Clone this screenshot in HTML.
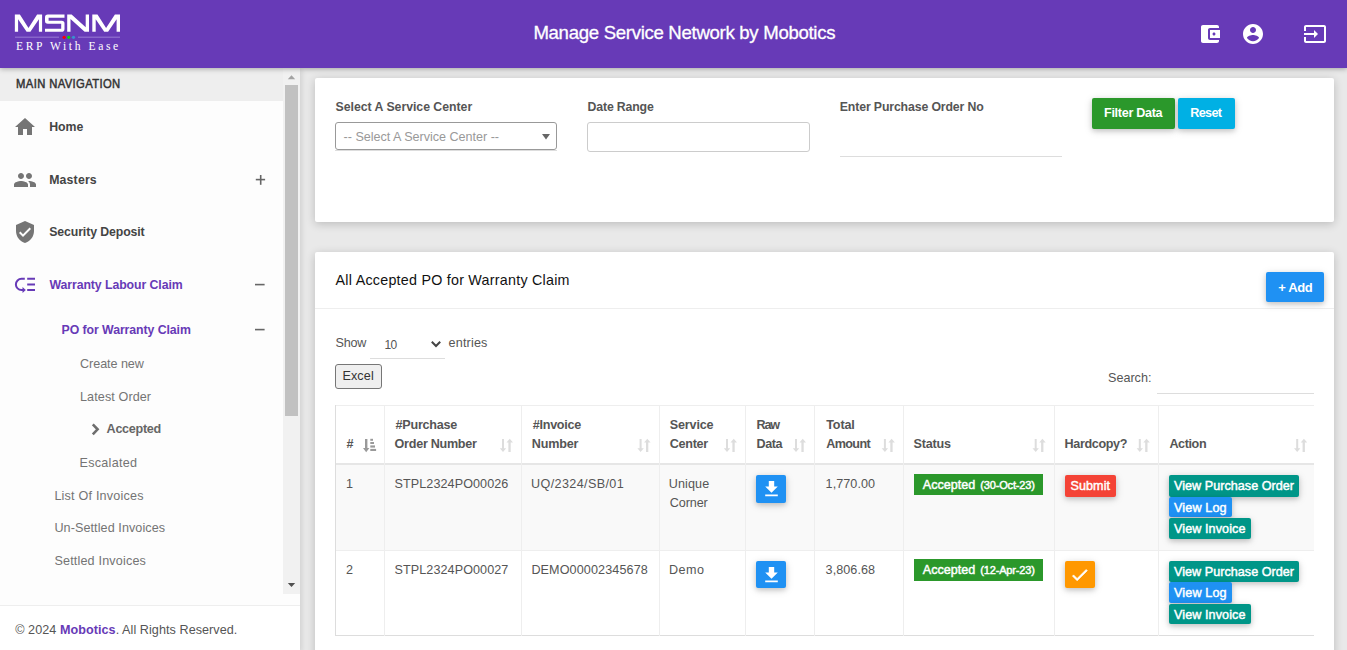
<!DOCTYPE html>
<html><head><meta charset="utf-8">
<style>
*{box-sizing:border-box;margin:0;padding:0}
html,body{width:1347px;height:650px;overflow:hidden;font-family:"Liberation Sans",sans-serif;background:#e9e9e9;color:#555;position:relative}
.a{position:absolute}
.tx{position:absolute;white-space:nowrap;line-height:1;z-index:20}
#hdr{position:absolute;left:0;top:0;width:1347px;height:68px;background:#673ab7;box-shadow:0 1px 5px rgba(0,0,0,.3);z-index:10}
#side{position:absolute;left:0;top:68px;width:300px;height:582px;background:#fdfdfd;box-shadow:2px 2px 5px rgba(0,0,0,.1);z-index:5;overflow:hidden}
.card{position:absolute;background:#fff;border-radius:2px;box-shadow:0 2px 10px rgba(0,0,0,.2)}
.btn{position:absolute;border-radius:2px;box-shadow:0 2px 5px rgba(0,0,0,.16),0 2px 10px rgba(0,0,0,.12)}
.vl{position:absolute;width:1px;background:#eee}
.hl{position:absolute;height:1px;background:#eee}
svg{position:absolute;overflow:visible}

</style></head><body>
<div id="hdr">
  <svg style="left:0;top:0" width="140" height="68" viewBox="0 0 140 68">
    <g fill="#fff">
      <path d="M14.85,31.7 V14.6 H19.9 L28.5,28 L37.1,14.6 H42.1 V31.7 H38.9 V19.3 L30.4,31.7 H26.6 L18.1,19.3 V31.7 Z"/>
      <path d="M64.5,14.6 H47.8 Q45,14.6 45,17.4 V21 Q45,23.8 47.8,23.8 H61.2 V28.7 H45 V31.7 H61.7 Q64.5,31.7 64.5,28.9 V23.6 Q64.5,20.8 61.7,20.8 H48.6 V17.7 H64.5 Z"/>
      <path d="M67.2,31.7 V14.6 H71.6 L85.7,27.2 V14.6 H89 V31.7 H84.6 L70.5,19.1 V31.7 Z"/>
      <path d="M92.3,31.7 V14.6 H97.5 L106.1,28 L114.9,14.6 H120 V31.7 H116.6 V19.3 L108.1,31.7 H104.2 L95.7,19.3 V31.7 Z"/>
    </g>
    <rect x="15" y="36.6" width="44" height="1.2" fill="#9170cf"/>
    <rect x="78" y="36.6" width="42" height="1.2" fill="#9170cf"/>
    <circle cx="64.1" cy="37.3" r="1.6" fill="#ff0000"/>
    <circle cx="68.7" cy="37.3" r="1.6" fill="#00e000"/>
    <circle cx="73.5" cy="37.3" r="1.6" fill="#3a8ed0"/>
    <text x="16" y="49.7" font-family="Liberation Serif" font-size="11.6" fill="#fff" letter-spacing="2.6">ERP With Ease</text>
  </svg>
  <svg style="left:1198px;top:22px" width="24" height="24" viewBox="0 0 24 24"><path fill="#fff" d="M21 18v1c0 1.1-.9 2-2 2H5c-1.11 0-2-.9-2-2V5c0-1.1.89-2 2-2h14c1.1 0 2 .9 2 2v1h-9c-1.11 0-2 .9-2 2v8c0 1.1.89 2 2 2h9zm-9-2h10V8H12v8zm4-2.5c-.83 0-1.5-.67-1.5-1.5s.67-1.5 1.5-1.5 1.5.67 1.5 1.5-.67 1.5-1.5 1.5z"/></svg>
  <svg style="left:1241px;top:22px" width="24" height="24" viewBox="0 0 24 24"><path fill="#fff" d="M12 2C6.48 2 2 6.48 2 12s4.48 10 10 10 10-4.48 10-10S17.52 2 12 2zm0 3c1.66 0 3 1.34 3 3s-1.34 3-3 3-3-1.34-3-3 1.34-3 3-3zm0 14.2c-2.5 0-4.71-1.28-6-3.22.03-1.99 4-3.080 6-3.08 1.99 0 5.97 1.09 6 3.08-1.29 1.94-3.5 3.22-6 3.22z"/></svg>
  <svg style="left:1303px;top:22px" width="24" height="24" viewBox="0 0 24 24"><path fill="#fff" d="M21 3.01H3c-1.1 0-2 .9-2 2V9h2V4.99h18v14.03H3V15H1v4.01c0 1.1.9 1.98 2 1.98h18c1.1 0 2-.88 2-1.98v-14c0-1.11-.9-2-2-2zM11 16l4-4-4-4v3H1v2h10v3z"/></svg>
</div>

<div id="side">
  <div class="a" style="left:0;top:0;width:285px;height:33px;background:#eee"></div>
  <!-- scrollbar -->
  <div class="a" style="left:283px;top:0;width:17px;height:526px;background:#f1f1f1"></div>
  <div class="a" style="left:285px;top:17px;width:13px;height:331px;background:#c1c1c1"></div>
  <svg style="left:283px;top:0" width="17" height="526"><path d="M4.8,11.3 L8.5,7.3 L12.2,11.3 Z" fill="#a3a3a3"/><path d="M4.8,515 L8.5,519 L12.2,515 Z" fill="#505050"/></svg>
  <!-- footer -->
  <div class="a" style="left:0;top:537px;width:300px;height:45px;background:#fff;border-top:1px solid #eee"></div>
  <!-- icons -->
  <svg style="left:12.7px;top:47px" width="24" height="24" viewBox="0 0 24 24"><path fill="#757575" d="M10 20v-6h4v6h5v-8h3L12 3 2 12h3v8z"/></svg>
  <svg style="left:13px;top:100px" width="24" height="24" viewBox="0 0 24 24"><path fill="#757575" d="M16 11c1.66 0 2.99-1.34 2.99-3S17.66 5 16 5c-1.66 0-3 1.34-3 3s1.34 3 3 3zm-8 0c1.66 0 2.99-1.34 2.99-3S9.66 5 8 5C6.34 5 5 6.34 5 8s1.34 3 3 3zm0 2c-2.33 0-7 1.17-7 3.5V19h14v-2.5c0-2.330-4.67-3.5-7-3.5zm8 0c-.29 0-.62.02-.97.05 1.16.84 1.97 1.97 1.97 3.45V19h6v-2.5c0-2.33-4.670-3.5-7-3.5z"/></svg>
  <svg style="left:12.8px;top:152px" width="24" height="24" viewBox="0 0 24 24"><path fill="#757575" d="M12 1L3 5v6c0 5.55 3.84 10.74 9 12 5.16-1.26 9-6.45 9-12V5l-9-4zm-2 16l-4-4 1.41-1.41L10 14.17l6.59-6.59L18 9l-8 8z"/></svg>
  <svg style="left:0;top:0" width="300" height="582">
    <g fill="none" stroke="#673ab7" stroke-width="2">
      <path d="M24.8,210.8 H21.5 A5.5,5.5 0 0 0 21.5,222 H23.5"/>
      <path d="M27.2,210.8 H35 M27.2,216.5 H35 M27.2,222 H35"/>
    </g>
    <path d="M22.5,219 L25.8,222 L22.5,225 Z" fill="#673ab7"/>
    <g fill="#666">
      <rect x="255.8" y="110.8" width="9.3" height="1.6"/>
      <rect x="259.9" y="107" width="1.6" height="9.8"/>
      <rect x="255" y="215.8" width="9.6" height="1.6"/>
      <rect x="255" y="260.8" width="9.6" height="1.6"/>
    </g>
    <path d="M92.8,356.3 L97.6,361.3 L92.8,366.3" fill="none" stroke="#6e6e6e" stroke-width="2.6"/>
  </svg>
</div>

<!-- card 1 -->
<div class="card" style="left:315px;top:78px;width:1019px;height:144px"></div>
<div class="a" style="left:335px;top:122px;width:222px;height:28px;border:1px solid #999;border-radius:3px;background:#fff"></div>
<div class="hl" style="left:335px;top:150px;width:222px;background:#ddd"></div>
<svg style="left:0;top:0" width="1" height="1"><path d="M542,134 L550,134 L546,139.5 Z" fill="#666"/></svg>
<div class="a" style="left:587px;top:122px;width:223px;height:30px;border:1px solid #ccc;border-radius:3px;background:#fff"></div>
<div class="hl" style="left:840px;top:156px;width:222px;background:#ddd"></div>
<div class="btn" style="left:1092px;top:98px;width:83px;height:31px;background:#2b982b"></div>
<div class="btn" style="left:1178px;top:98px;width:57px;height:31px;background:#00b0e4"></div>

<!-- card 2 -->
<div class="card" style="left:315px;top:252px;width:1019px;height:430px"></div>
<div class="hl" style="left:315px;top:308px;width:1019px;background:#eee"></div>
<div class="btn" style="left:1266px;top:272px;width:58px;height:30px;background:#1f91f3"></div>
<div class="hl" style="left:370px;top:358px;width:75px;background:#ddd"></div>
<svg style="left:0;top:0" width="1" height="1"><path d="M431.8,341.8 L436,346 L440.2,341.8" fill="none" stroke="#444" stroke-width="2"/></svg>
<div class="a" style="left:335px;top:364px;width:47px;height:25px;border:1px solid #767676;border-radius:3px;background:#efefef"></div>
<div class="hl" style="left:1157px;top:393px;width:157px;background:#ddd"></div>

<!-- table -->
<div class="a" style="left:335px;top:464px;width:979px;height:86px;background:#f9f9f9"></div>
<div class="hl" style="left:335px;top:405px;width:979px"></div>
<div class="hl" style="left:335px;top:463px;width:979px;height:2px;background:#e6e6e6"></div>
<div class="hl" style="left:335px;top:550px;width:979px"></div>
<div class="hl" style="left:335px;top:635px;width:979px;background:#ddd"></div>
<div class="vl" style="left:335px;top:405px;height:231px;background:#ddd"></div>
<div class="vl" style="left:384px;top:405px;height:231px"></div>
<div class="vl" style="left:521px;top:405px;height:231px"></div>
<div class="vl" style="left:659px;top:405px;height:231px"></div>
<div class="vl" style="left:745px;top:405px;height:231px"></div>
<div class="vl" style="left:814px;top:405px;height:231px"></div>
<div class="vl" style="left:903px;top:405px;height:231px"></div>
<div class="vl" style="left:1054px;top:405px;height:231px"></div>
<div class="vl" style="left:1158px;top:405px;height:231px"></div>

<!-- sort icons -->
<svg style="left:0;top:0" width="1" height="1">
  <g fill="#999">
    <rect x="365" y="439" width="2.4" height="10"/>
    <path d="M363,448 L369.4,448 L366.2,452.2 Z"/>
    <rect x="370.3" y="438.8" width="2.7" height="2"/>
    <rect x="370.3" y="442" width="3.7" height="2"/>
    <rect x="370.3" y="445.4" width="4.7" height="2.2"/>
    <rect x="370.3" y="448.9" width="5.8" height="2.1"/>
  </g>
  <g fill="#ddd">
    <g id="both">
      <rect x="502" y="439" width="2" height="10"/>
      <path d="M499.8,448.2 L506.2,448.2 L503,452 Z"/>
      <rect x="508.4" y="442" width="2.3" height="10"/>
      <path d="M506.5,442.5 L513,442.5 L509.7,438.8 Z"/>
    </g>
    <use href="#both" x="137.6" y="0"/>
    <use href="#both" x="224" y="0"/>
    <use href="#both" x="293" y="0"/>
    <use href="#both" x="381.9" y="0"/>
    <use href="#both" x="532.7" y="0"/>
    <use href="#both" x="636.8" y="0"/>
    <use href="#both" x="794.2" y="0"/>
  </g>
</svg>

<!-- row buttons -->
<div class="btn" style="left:756px;top:475px;width:30px;height:28px;background:#1f91f3"></div>
<div class="btn" style="left:756px;top:561px;width:30px;height:27px;background:#1f91f3"></div>
<svg style="left:0;top:0" width="1" height="1">
  <g fill="#fff">
    <path transform="translate(760.7,478.3) scale(0.9)" d="M19 9h-4V3H9v6H5l7 7 7-7zM5 18v2h14v-2H5z"/>
    <path transform="translate(760.7,564.3) scale(0.9)" d="M19 9h-4V3H9v6H5l7 7 7-7zM5 18v2h14v-2H5z"/>
  </g>
</svg>
<div class="a" style="left:914px;top:474px;width:129px;height:21px;background:#2b982b"></div>
<div class="a" style="left:914px;top:559px;width:129px;height:22px;background:#2b982b"></div>
<div class="btn" style="left:1065px;top:475px;width:51px;height:21.5px;background:#f44336"></div>
<div class="btn" style="left:1065px;top:561px;width:30px;height:26.6px;background:#ff9800"></div>
<svg style="left:0;top:0" width="1" height="1"><path transform="translate(1069.5,564.7) scale(0.85)" fill="#fff" stroke="#fff" stroke-width="0.7" d="M9 16.17L4.830 12l-1.42 1.41L9 19 21 7l-1.41-1.41z"/></svg>
<div class="btn" style="left:1169px;top:475px;width:130px;height:21.5px;background:#009688"></div>
<div class="btn" style="left:1169px;top:497.4px;width:62.6px;height:19.7px;background:#1f91f3"></div>
<div class="btn" style="left:1169px;top:518.1px;width:82px;height:21.2px;background:#009688"></div>
<div class="btn" style="left:1169px;top:561px;width:130px;height:20.5px;background:#009688"></div>
<div class="btn" style="left:1169px;top:582.4px;width:62.6px;height:20.6px;background:#1f91f3"></div>
<div class="btn" style="left:1169px;top:604px;width:82px;height:20.3px;background:#009688"></div>

<div id="title" class="tx" style="left:533.40px;top:23.96px;font-size:18.60px;font-weight:normal;color:#fff;letter-spacing:-0.303px;-webkit-text-stroke:0.3px #fff;">Manage Service Network by Mobotics</div>
<div id="mainnav" class="tx" style="left:16.00px;top:77.76px;font-size:12.80px;font-weight:normal;color:#333;letter-spacing:0.421px;-webkit-text-stroke:0.5px #333;transform:scaleX(0.88);transform-origin:0 0;">MAIN NAVIGATION</div>
<div id="home" class="tx" style="left:49.20px;top:121.19px;font-size:12.30px;font-weight:bold;color:#444;letter-spacing:-0.003px;">Home</div>
<div id="masters" class="tx" style="left:49.20px;top:174.19px;font-size:12.30px;font-weight:bold;color:#444;letter-spacing:0.168px;">Masters</div>
<div id="secdep" class="tx" style="left:49.20px;top:226.29px;font-size:12.30px;font-weight:bold;color:#444;letter-spacing:-0.101px;">Security Deposit</div>
<div id="wlc" class="tx" style="left:49.40px;top:278.89px;font-size:12.30px;font-weight:bold;color:#673ab7;letter-spacing:-0.075px;">Warranty Labour Claim</div>
<div id="pofw" class="tx" style="left:61.60px;top:324.19px;font-size:12.30px;font-weight:bold;color:#673ab7;letter-spacing:-0.075px;">PO for Warranty Claim</div>
<div id="create" class="tx" style="left:80.00px;top:358.33px;font-size:12.60px;font-weight:normal;color:#747474;letter-spacing:-0.054px;">Create new</div>
<div id="latest" class="tx" style="left:80.00px;top:391.23px;font-size:12.60px;font-weight:normal;color:#747474;letter-spacing:0.097px;">Latest Order</div>
<div id="accepted" class="tx" style="left:106.60px;top:423.03px;font-size:12.60px;font-weight:bold;color:#666;letter-spacing:-0.288px;">Accepted</div>
<div id="escal" class="tx" style="left:79.60px;top:456.93px;font-size:12.60px;font-weight:normal;color:#747474;letter-spacing:0.250px;">Escalated</div>
<div id="loi" class="tx" style="left:54.40px;top:489.93px;font-size:12.60px;font-weight:normal;color:#747474;letter-spacing:0.201px;">List Of Invoices</div>
<div id="usi" class="tx" style="left:54.40px;top:522.03px;font-size:12.60px;font-weight:normal;color:#747474;letter-spacing:0.083px;">Un-Settled Invoices</div>
<div id="si" class="tx" style="left:54.40px;top:554.73px;font-size:12.60px;font-weight:normal;color:#747474;letter-spacing:0.171px;">Settled Invoices</div>
<div id="foot" class="tx" style="left:15.20px;top:624.43px;font-size:12.60px;font-weight:normal;color:#555;letter-spacing:0.061px;">&copy; 2024 <b style="color:#673ab7">Mobotics</b>. All Rights Reserved.</div>
<div id="lbl1" class="tx" style="left:335.60px;top:101.09px;font-size:12.30px;font-weight:bold;color:#555;letter-spacing:-0.026px;">Select A Service Center</div>
<div id="lbl2" class="tx" style="left:587.60px;top:101.09px;font-size:12.30px;font-weight:bold;color:#555;letter-spacing:-0.162px;">Date Range</div>
<div id="lbl3" class="tx" style="left:839.80px;top:101.09px;font-size:12.30px;font-weight:bold;color:#555;letter-spacing:-0.136px;">Enter Purchase Order No</div>
<div id="ph" class="tx" style="left:343.60px;top:130.53px;font-size:12.60px;font-weight:normal;color:#999;letter-spacing:-0.022px;">-- Select A Service Center --</div>
<div id="filt" class="tx" style="left:1104.00px;top:106.73px;font-size:12.60px;font-weight:bold;color:#fff;letter-spacing:-0.300px;">Filter Data</div>
<div id="reset" class="tx" style="left:1190.20px;top:106.73px;font-size:12.60px;font-weight:bold;color:#fff;letter-spacing:-0.625px;">Reset</div>
<div id="c2title" class="tx" style="left:335.60px;top:272.70px;font-size:14.30px;font-weight:normal;color:#111;letter-spacing:0.242px;">All Accepted PO for Warranty Claim</div>
<div id="add" class="tx" style="left:1278.20px;top:280.70px;font-size:13.00px;font-weight:bold;color:#fff;letter-spacing:-0.375px;">+ Add</div>
<div id="show" class="tx" style="left:335.40px;top:336.63px;font-size:12.60px;font-weight:normal;color:#555;letter-spacing:-0.165px;">Show</div>
<div id="ten" class="tx" style="left:384.40px;top:338.54px;font-size:12.00px;font-weight:normal;color:#555;letter-spacing:-0.500px;">10</div>
<div id="entries" class="tx" style="left:448.60px;top:336.63px;font-size:12.60px;font-weight:normal;color:#555;letter-spacing:0.167px;">entries</div>
<div id="excel" class="tx" style="left:342.40px;top:369.83px;font-size:12.60px;font-weight:normal;color:#333;letter-spacing:0.125px;">Excel</div>
<div id="search" class="tx" style="left:1108.00px;top:372.33px;font-size:12.60px;font-weight:normal;color:#555;letter-spacing:-0.003px;">Search:</div>
<div id="h_hash" class="tx" style="left:346.60px;top:437.93px;font-size:12.60px;font-weight:bold;color:#555;letter-spacing:-3.000px;">#</div>
<div id="h_pur1" class="tx" style="left:395.60px;top:418.93px;font-size:12.60px;font-weight:bold;color:#555;letter-spacing:-0.250px;">#Purchase</div>
<div id="h_pur2" class="tx" style="left:394.60px;top:437.93px;font-size:12.60px;font-weight:bold;color:#555;letter-spacing:-0.278px;">Order Number</div>
<div id="h_inv1" class="tx" style="left:532.80px;top:418.93px;font-size:12.60px;font-weight:bold;color:#555;letter-spacing:-0.286px;">#Invoice</div>
<div id="h_inv2" class="tx" style="left:531.80px;top:437.93px;font-size:12.60px;font-weight:bold;color:#555;letter-spacing:-0.200px;">Number</div>
<div id="h_sc1" class="tx" style="left:669.80px;top:418.93px;font-size:12.60px;font-weight:bold;color:#555;letter-spacing:-0.164px;">Service</div>
<div id="h_sc2" class="tx" style="left:669.80px;top:437.93px;font-size:12.60px;font-weight:bold;color:#555;letter-spacing:-0.300px;">Center</div>
<div id="h_raw1" class="tx" style="left:756.60px;top:418.93px;font-size:12.60px;font-weight:bold;color:#555;letter-spacing:-1.250px;">Raw</div>
<div id="h_raw2" class="tx" style="left:756.60px;top:437.93px;font-size:12.60px;font-weight:bold;color:#555;letter-spacing:-0.502px;">Data</div>
<div id="h_tot1" class="tx" style="left:826.20px;top:418.93px;font-size:12.60px;font-weight:bold;color:#555;letter-spacing:-0.125px;">Total</div>
<div id="h_tot2" class="tx" style="left:826.20px;top:437.93px;font-size:12.60px;font-weight:bold;color:#555;letter-spacing:-0.600px;">Amount</div>
<div id="h_stat" class="tx" style="left:913.60px;top:437.93px;font-size:12.60px;font-weight:bold;color:#555;letter-spacing:-0.200px;">Status</div>
<div id="h_hard" class="tx" style="left:1064.60px;top:437.93px;font-size:12.60px;font-weight:bold;color:#555;letter-spacing:-0.375px;">Hardcopy?</div>
<div id="h_act" class="tx" style="left:1169.40px;top:437.93px;font-size:12.60px;font-weight:bold;color:#555;letter-spacing:-0.400px;">Action</div>
<div id="r_num0" class="tx" style="left:346.00px;top:478.43px;font-size:12.60px;font-weight:normal;color:#555;letter-spacing:-3.000px;">1</div>
<div id="r_po0" class="tx" style="left:394.60px;top:478.43px;font-size:12.60px;font-weight:normal;color:#555;letter-spacing:0.070px;">STPL2324PO00026</div>
<div id="r_inv0" class="tx" style="left:531.00px;top:478.43px;font-size:12.60px;font-weight:normal;color:#555;letter-spacing:0.379px;">UQ/2324/SB/01</div>
<div id="r_sc0" class="tx" style="left:668.80px;top:478.43px;font-size:12.60px;font-weight:normal;color:#555;letter-spacing:0.100px;">Unique</div>
<div id="r_sc20" class="tx" style="left:669.80px;top:497.43px;font-size:12.60px;font-weight:normal;color:#555;letter-spacing:-0.100px;">Corner</div>
<div id="r_amt0" class="tx" style="left:825.60px;top:478.43px;font-size:12.60px;font-weight:normal;color:#555;letter-spacing:0.067px;">1,770.00</div>
<div id="r_acc0" class="tx" style="left:922.80px;top:478.83px;font-size:12.60px;font-weight:normal;color:#fff;letter-spacing:-0.002px;-webkit-text-stroke:0.45px #fff;">Accepted</div>
<div id="r_date0" class="tx" style="left:980.20px;top:479.99px;font-size:11.00px;font-weight:normal;color:#fff;letter-spacing:-0.150px;-webkit-text-stroke:0.45px #fff;">(30-Oct-23)</div>
<div id="r_vpo0" class="tx" style="left:1174.00px;top:480.13px;font-size:12.60px;font-weight:normal;color:#fff;letter-spacing:0.030px;-webkit-text-stroke:0.45px #fff;">View Purchase Order</div>
<div id="r_vl0" class="tx" style="left:1174.00px;top:501.93px;font-size:12.60px;font-weight:normal;color:#fff;letter-spacing:0.141px;-webkit-text-stroke:0.45px #fff;">View Log</div>
<div id="r_vi0" class="tx" style="left:1174.00px;top:522.63px;font-size:12.60px;font-weight:normal;color:#fff;letter-spacing:0.092px;-webkit-text-stroke:0.45px #fff;">View Invoice</div>
<div id="r_num1" class="tx" style="left:346.00px;top:564.23px;font-size:12.60px;font-weight:normal;color:#555;letter-spacing:1.800px;">2</div>
<div id="r_po1" class="tx" style="left:394.60px;top:564.23px;font-size:12.60px;font-weight:normal;color:#555;letter-spacing:0.070px;">STPL2324PO00027</div>
<div id="r_inv1" class="tx" style="left:531.40px;top:564.23px;font-size:12.60px;font-weight:normal;color:#555;letter-spacing:0.110px;">DEMO00002345678</div>
<div id="r_sc1" class="tx" style="left:669.00px;top:564.23px;font-size:12.60px;font-weight:normal;color:#555;letter-spacing:0.504px;">Demo</div>
<div id="r_amt1" class="tx" style="left:825.60px;top:564.23px;font-size:12.60px;font-weight:normal;color:#555;letter-spacing:0.067px;">3,806.68</div>
<div id="r_acc1" class="tx" style="left:922.80px;top:563.93px;font-size:12.60px;font-weight:normal;color:#fff;letter-spacing:-0.002px;-webkit-text-stroke:0.45px #fff;">Accepted</div>
<div id="r_date1" class="tx" style="left:980.20px;top:565.09px;font-size:11.00px;font-weight:normal;color:#fff;letter-spacing:-0.150px;-webkit-text-stroke:0.45px #fff;">(12-Apr-23)</div>
<div id="r_vpo1" class="tx" style="left:1174.00px;top:566.13px;font-size:12.60px;font-weight:normal;color:#fff;letter-spacing:0.030px;-webkit-text-stroke:0.45px #fff;">View Purchase Order</div>
<div id="r_vl1" class="tx" style="left:1174.00px;top:587.13px;font-size:12.60px;font-weight:normal;color:#fff;letter-spacing:0.141px;-webkit-text-stroke:0.45px #fff;">View Log</div>
<div id="r_vi1" class="tx" style="left:1174.00px;top:608.63px;font-size:12.60px;font-weight:normal;color:#fff;letter-spacing:0.092px;-webkit-text-stroke:0.45px #fff;">View Invoice</div>
<div id="submit" class="tx" style="left:1070.40px;top:480.13px;font-size:12.60px;font-weight:normal;color:#fff;letter-spacing:0.100px;-webkit-text-stroke:0.45px #fff;">Submit</div>
</body></html>
